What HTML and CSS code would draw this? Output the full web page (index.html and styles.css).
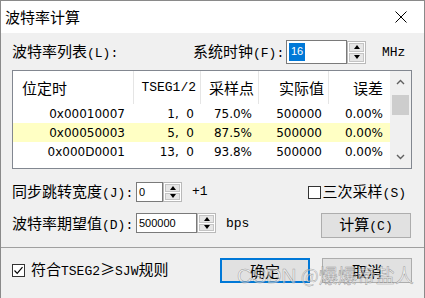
FILE: index.html
```html
<!DOCTYPE html>
<html>
<head>
<meta charset="utf-8">
<link rel="stylesheet" href="styles.css">
</head>
<body>
<div class="window">
  <div class="titlebar">
    <span class="title">波特率计算</span>
    <span class="close"><svg width="12" height="12" viewBox="0 0 12 12"><path d="M0.5 0.5 L11.5 11.5 M11.5 0.5 L0.5 11.5" stroke="#000" stroke-width="1" fill="none"/></svg></span>
  </div>
  <div class="body">
    <div class="row r1">
      <span class="lbl-list">波特率列表<span class="m">(L):</span></span>
      <span class="lbl-clock">系统时钟<span class="m">(F):</span></span>
      <div class="edit e-clock"><span class="sel">16</span></div>
      <div class="spin s-tall"><b class="up"><i></i></b><b class="dn"><i></i></b></div>
      <span class="m unit">MHz</span>
    </div>
    <div class="list">
      <div class="table">
        <div class="tr th">
          <span class="c1 left">位定时</span>
          <span class="m">TSEG1/2</span>
          <span>采样点</span>
          <span>实际值</span>
          <span class="last">误差</span>
        </div>
        <div class="tr td">
          <span class="c1">0x00010007</span><span>1,&nbsp; 0</span><span>75.0%</span><span>500000</span><span>0.00%</span>
        </div>
        <div class="tr td hl">
          <span class="c1">0x00050003</span><span>5,&nbsp; 0</span><span>87.5%</span><span>500000</span><span>0.00%</span>
        </div>
        <div class="tr td">
          <span class="c1">0x000D0001</span><span>13,&nbsp; 0</span><span>93.8%</span><span>500000</span><span>0.00%</span>
        </div>
      </div>
      <div class="vscroll">
        <div class="sb-btn"><svg width="9" height="6" viewBox="0 0 9 6"><path d="M1 5 L4.5 1.5 L8 5" stroke="#606060" stroke-width="1.4" fill="none"/></svg></div>
        <div class="thumb"></div>
        <div class="sb-fill"></div>
        <div class="sb-btn"><svg width="9" height="6" viewBox="0 0 9 6"><path d="M1 1 L4.5 4.5 L8 1" stroke="#606060" stroke-width="1.4" fill="none"/></svg></div>
      </div>
    </div>
    <div class="row r3">
      <span class="lbl">同步跳转宽度<span class="m">(J):</span></span>
      <div class="edit e-sjw">0</div>
      <div class="spin"><b class="up"><i></i></b><b class="dn"><i></i></b></div>
      <span class="m suffix">+1</span>
      <label class="chk chk-triple"><span class="box"></span><span>三次采样<span class="m">(S)</span></span></label>
    </div>
    <div class="row r4">
      <span class="lbl">波特率期望值<span class="m">(D):</span></span>
      <div class="edit e-bps">500000</div>
      <div class="spin"><b class="up"><i></i></b><b class="dn"><i></i></b></div>
      <span class="m suffix">bps</span>
      <button class="btn btn-calc">计算<span class="m">(C)</span></button>
    </div>
  </div>
  <div class="sep"></div>
  <div class="footer">
    <label class="chk"><span class="box checked"><svg width="11" height="11" viewBox="0 0 11 11"><path d="M1.5 5.5 L4.2 8.3 L9.5 2.2" stroke="#000" stroke-width="1.2" fill="none"/></svg></span><span>符合<span class="m">TSEG2</span>≥<span class="m">SJW</span>规则</span></label>
    <div class="actions">
      <button class="btn btn-default">确定</button>
      <button class="btn">取消</button>
    </div>
  </div>
  <div class="watermark"><span class="wm-lat">CSDN</span> @爆爆帝盐人</div>
</div>
</body>
</html>
```
FILE: styles.css
```css
html, body {
  margin: 0;
  padding: 0;
  background: #f0f0f0;
}

.window {
  position: relative;
  width: 425px;
  height: 298px;
  box-sizing: border-box;
  border: 1px solid #8a8a8a;
  border-bottom: none;
  background: #f0f0f0;
  font-family: "Noto Sans CJK SC", sans-serif;
  font-size: 15px;
  color: #000;
  display: flex;
  flex-direction: column;
  overflow: hidden;
}

.m {
  font-family: "Liberation Mono", monospace;
  font-size: 13px;
}

.titlebar {
  height: 32px;
  flex: none;
  background: #fff;
  display: flex;
  align-items: center;
  justify-content: space-between;
  padding-left: 4px;
}

.title {
  font-size: 15px;
  line-height: 20px;
}

.close {
  width: 46px;
  height: 32px;
  display: flex;
  align-items: center;
  justify-content: center;
}

.body {
  padding: 7px 11px 0;
}

.row {
  display: flex;
  align-items: center;
}

.r1 {
  height: 24px;
}

.lbl-list {
  width: 181px;
  line-height: 20px;
}

.lbl-clock {
  width: 93px;
  line-height: 20px;
}

.edit {
  box-sizing: border-box;
  height: 20px;
  border: 1px solid #7a7a7a;
  background: #fff;
  font-family: "Liberation Sans", sans-serif;
  font-size: 11px;
  display: flex;
  align-items: center;
  padding-left: 2px;
}

.e-clock {
  width: 61px;
  height: 24px;
}

.sel {
  background: #0078d7;
  color: #fff;
  padding: 2px 2px 3px;
  line-height: 13px;
}

.spin {
  box-sizing: border-box;
  width: 19px;
  height: 20px;
  border: 1px solid #b9b9b9;
  background: #fff;
  display: flex;
  flex-direction: column;
  gap: 1px;
  padding: 1px;
}

.spin.s-tall {
  height: 23px;
}

.spin b {
  flex: 1;
  background: #e6e6e6;
  border: 1px solid #c4c4c4;
  display: flex;
  align-items: center;
  justify-content: center;
}

.spin i {
  width: 0;
  height: 0;
  border-left: 3px solid transparent;
  border-right: 3px solid transparent;
}

.spin .up i {
  border-bottom: 4px solid #000;
}

.spin .dn i {
  border-top: 4px solid #000;
}

.unit {
  margin-left: 16px;
}

.list {
  margin-top: 6px;
  width: 400px;
  height: 99px;
  box-sizing: border-box;
  border: 1px solid #828790;
  background: #fff;
  display: flex;
}

.table {
  width: 377px;
}

.tr {
  display: grid;
  grid-template-columns: 121px 67px 58px 70px 61px;
  align-items: center;
}

.tr > span {
  text-align: right;
  white-space: nowrap;
}

.th {
  height: 33px;
  align-items: stretch;
}

.th > span {
  border-right: 1px solid #e5e5e5;
  padding-right: 4px;
  display: flex;
  align-items: center;
  justify-content: flex-end;
}

.th > span.left {
  justify-content: flex-start;
  padding-left: 9px;
}

.th > span.last {
  border-right: none;
  padding-right: 7px;
}

.td {
  height: 19px;
  font-family: "DejaVu Sans", sans-serif;
  font-size: 12px;
}

.td > span {
  padding-right: 7px;
}

.td > span.c1 {
  padding-right: 9px;
}

.hl {
  background: #ffffc4;
}

.vscroll {
  width: 21px;
  background: #f0f0f0;
  display: flex;
  flex-direction: column;
  align-items: center;
}

.sb-btn {
  height: 22px;
  width: 21px;
  display: flex;
  align-items: center;
  justify-content: center;
}

.thumb {
  margin-top: 2px;
  width: 17px;
  height: 20px;
  background: #cdcdcd;
}

.sb-fill {
  flex: 1;
}

.r3 {
  height: 20px;
  margin-top: 13px;
}

.lbl {
  width: 124px;
  line-height: 20px;
}

.e-sjw {
  width: 27px;
}

.e-bps {
  width: 61px;
}

.suffix {
  margin-left: 10px;
  line-height: 22px;
}

.chk {
  display: flex;
  align-items: center;
  gap: 6px;
  line-height: 20px;
}

.chk-triple {
  margin-left: auto;
  margin-right: 7px;
  gap: 2px;
}

.box {
  box-sizing: border-box;
  width: 13px;
  height: 13px;
  border: 1px solid #333;
  background: #fff;
  display: flex;
  align-items: center;
  justify-content: center;
}

.r4 {
  height: 25px;
  margin-top: 11px;
  align-items: flex-start;
}

.btn {
  box-sizing: border-box;
  width: 90px;
  height: 25px;
  border: 1px solid #adadad;
  background: #e1e1e1;
  font-family: "Noto Sans CJK SC", sans-serif;
  font-size: 15px;
  color: #000;
  padding: 0;
  line-height: 20px;
}

.btn-calc {
  margin-left: auto;
  margin-right: 2px;
}

.btn-default {
  border: 2px solid #0078d7;
}

.sep {
  margin-top: 9px;
  border-top: 1px solid #a0a0a0;
}

.footer {
  display: flex;
  align-items: center;
  padding: 10px 11px 0;
  height: 25px;
}

.actions {
  margin-left: auto;
  margin-right: 1px;
  display: flex;
  gap: 12px;
}

.watermark {
  position: absolute;
  left: 236px;
  top: 261px;
  font-family: "Noto Sans CJK SC", sans-serif;
  font-size: 19px;
  line-height: 26px;
  color: rgba(255, 255, 255, 0.5);
  -webkit-text-stroke: 0.5px rgba(120, 120, 120, 0.7);
  pointer-events: none;
  white-space: nowrap;
}

.wm-lat {
  font-family: "Liberation Sans", sans-serif;
  font-size: 21px;
}
```
